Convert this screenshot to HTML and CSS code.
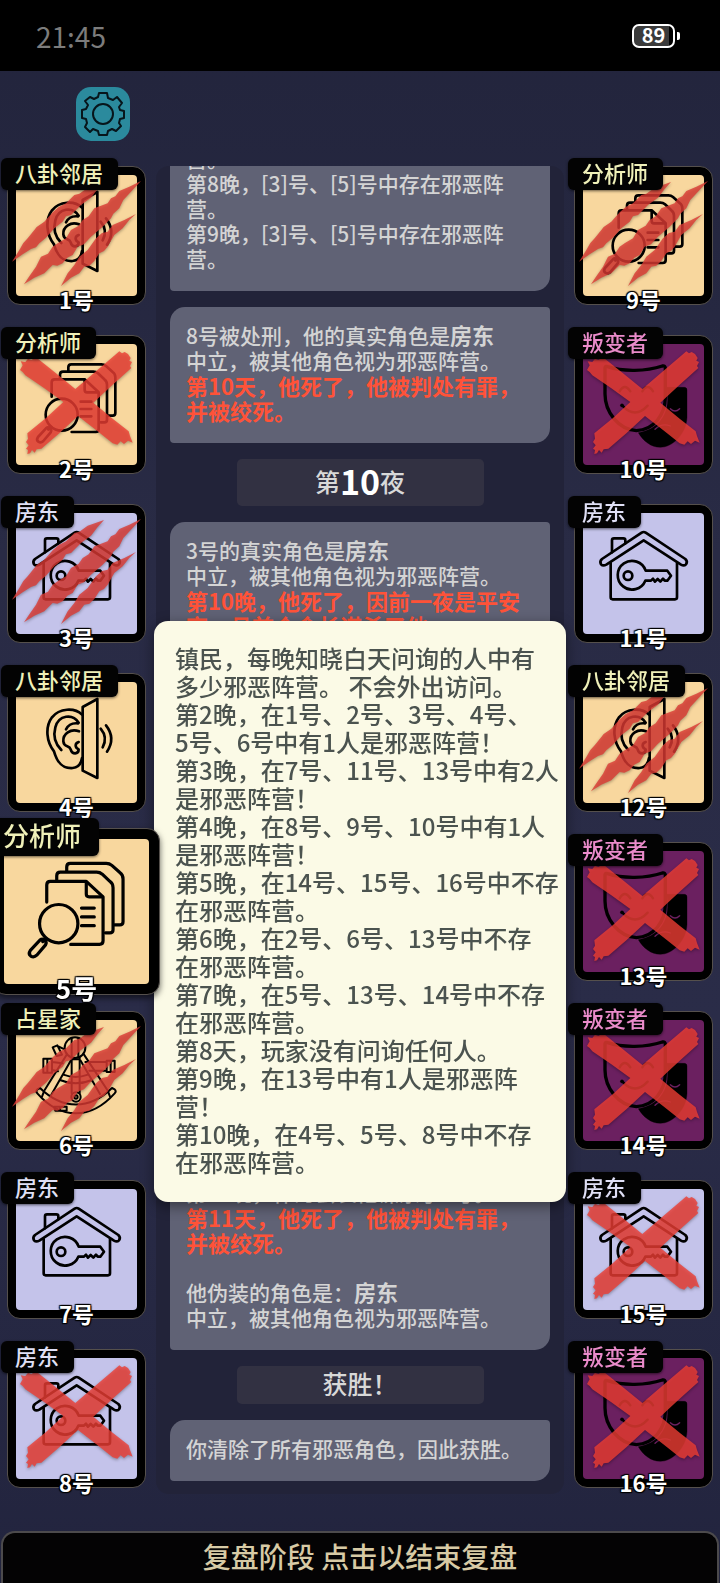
FILE: index.html
```html
<!doctype html>
<html lang="zh-CN">
	<head>
		<meta charset="UTF-8" />
		<meta name="viewport" content="width=device-width, initial-scale=1.0" />
		<title>复盘阶段</title>
		<link rel="stylesheet" href="styles.css">
	</head>
	<body>
		<!-- 图标定义 -->
		<svg class="icon-defs" aria-hidden="true">
			<defs>
				<g id="icon-ear" fill="none" stroke="#000" stroke-width="8" stroke-linecap="round" stroke-linejoin="round">
					<path d="M200 75L244 51V288L200 266Z" />
					<path d="M198 98C176 76 130 78 108 106C86 136 92 180 114 208C124 244 140 260 170 258C188 256 196 244 198 228" />
					<path d="M188 122C170 94 128 98 118 136C110 166 120 188 136 204" />
					<path d="M186 124C168 122 156 130 150 142M189 148C164 138 140 156 142 178C144 198 160 188 164 202C168 218 188 218 188 202C176 196 176 184 188 180" />
					<path d="M254 140Q276 166 260 196M270 130Q300 168 273 209" />
				</g>
				<g id="icon-docs" fill="none" stroke="#000" stroke-width="8" stroke-linecap="round" stroke-linejoin="round">
					<path d="M157 80V70Q157 61 166 61H256Q264 61 270 66L290 84Q298 90 298 100V207Q298 215 290 215H277" />
					<path d="M132 102V92Q132 83 141 83H232Q240 83 246 88L265 106Q273 112 273 122V227Q273 235 265 235H254" />
					<path d="M107 158V115Q107 106 116 106H206L248 145V255Q248 264 239 264H167" />
					<path d="M206 108V138Q206 145 213 145H246M194 173H226M194 195H226M194 217H226" />
					<circle cx="137" cy="212" r="48" />
					<path d="M105 249L97 257M90 253L66 279Q60 288 67 293Q75 298 82 291L104 265Q108 258 102 253Q96 248 90 253Z" />
				</g>
				<g id="icon-house" fill="none" stroke="#000" stroke-width="8" stroke-linecap="round" stroke-linejoin="round">
					<path d="M83 150V253Q83 259 89 259H276Q282 259 282 253V150" />
					<path d="M57 138L176 59Q182 55 188 59L307 138Q315 146 309 154Q303 160 294 155L182 82L70 155Q60 160 54 154Q49 145 57 138Z" />
					<path d="M87 118V82Q87 76 93 76H121Q127 76 127 82V91" />
					<path d="M188 173A43 43 0 1 0 187 203H204L210 197L216 206L224 198L232 206L240 197L245 203H253L264 188L253 173Z" />
					<circle cx="135" cy="188" r="13" />
				</g>
				<g id="icon-mask" stroke="#000" stroke-linecap="round" stroke-linejoin="round">
					<path d="M252 130H304Q312 130 312 138V220C310 270 268 310 232 310C204 310 180 290 166 266C224 258 256 214 254 160Z" />
					<path d="M66 72Q66 65 74 68C120 84 190 82 238 66Q247 64 247 73V160C247 212 212 258 160 260C106 256 66 204 66 150Z" fill="none" stroke-width="10" />
					<path d="M110 142Q125 116 142 142M178 142Q194 116 210 142M118 185Q156 226 194 185" fill="none" stroke-width="7" />
					<circle cx="117" cy="184" r="5" />
					<path d="M262 194Q276 208 290 194M216 256Q236 236 262 246" fill="none" stroke="#6b2060" stroke-width="4" />
				</g>
				<g id="icon-sextant" fill="none" stroke="#000" stroke-width="6" stroke-linecap="round" stroke-linejoin="round">
					<circle cx="177" cy="83" r="31" />
					<path d="M167 55V110M187 55V110M167 112V220M191 112V220M167 118H191" />
					<path d="M152 104L86 210M164 122L106 224M204 104L274 210M194 122L252 222" />
					<path d="M64 208Q58 214 64 220C134 300 224 300 296 220Q302 214 296 208L288 204C220 270 140 270 72 204Z" />
					<path d="M84 214L78 230M276 214L282 230M132 180Q178 200 228 180M142 164Q178 178 216 164" />
					<circle cx="180" cy="231" r="14" />
					<circle cx="180" cy="231" r="5" />
					<path d="M208 126H272M220 152H272M272 122H296V156H272ZM284 122V156" />
					<path d="M82 116H108V158H82ZM94 116V158M108 126L140 130M108 150L126 154" />
					<path d="M110 82L124 76L138 104L122 108ZM124 78L146 88M114 260H152V272H118ZM132 260V272" />
				</g>
				<g id="mark-cross" fill="#ee3d33" opacity="0.8">
					<path d="M12 78L20 64L14 52L28 54L36 44L46 48L60 40L120 88L178 135L240 82L298 32L310 22L318 28L326 24L336 30L344 42L340 50L348 54L342 66L346 72L290 122L232 176L290 224L338 262L342 276L350 296L336 290L324 300L314 292L304 302L290 298L240 258L186 216L130 268L76 314L62 316L56 326L48 318L42 328L34 330L36 318L30 314L38 304L30 294L36 284L34 268L90 222L142 174L84 132L28 94L20 84Z" />
				</g>
				<g id="mark-claw" fill="#dc3a34" opacity="0.8">
					<path d="M264 21L215 38L190 56L175 60L150 85L128 96L110 112L85 140L62 156L55 165L35 190L22 204L10 225L-12 260L20 238L45 222L60 217L70 205L90 188L115 160L140 140L150 124L165 120L195 90L225 68L245 42Z" />
					<path d="M375 18L340 35L310 48L298 64L285 70L275 85L235 100L218 124L200 135L188 152L165 165L150 190L126 204L110 215L96 236L75 245L60 275L40 304L24 328L55 308L85 295L110 270L124 272L140 265L154 248L170 240L185 215L204 208L225 185L260 155L285 130L292 116L310 100L322 75L345 50Z" />
					<path d="M360 117L325 135L290 150L275 170L258 174L240 190L215 225L190 245L175 270L155 295L135 333L165 308L190 295L205 275L220 272L235 258L250 235L264 228L275 215L295 180L320 160L340 135Z" />
				</g>
			</defs>
		</svg>

		<div class="status-bar">
			<span class="time">21:45</span>
			<span class="battery"><span class="battery-num">89</span></span>
		</div>

		<header class="toolbar">
			<button class="setting-btn" id="settingBtn" aria-label="设置">
				<svg viewBox="0 0 54 54" fill="none" stroke="#07151b" stroke-width="2" stroke-linejoin="round">
					<path d="M23 6H31L32 11L37 13L41 10L46 16L43 20L44 23L48 24V31L44 32L43 36L45 39L40 44L36 42L32 44L31 48H23L22 44L17 42L14 45L9 40L11 36L10 32L6 31V23L10 22L12 18L9 14L14 10L18 12L22 10Z" />
					<circle cx="27" cy="27" r="10" />
				</svg>
			</button>
		</header>

		<main class="board">
			<div class="seats" id="seatsLeft"></div>

			<section class="log">
				<div class="log-list">
					<div class="message">
						<p>营。</p>
						<p>第8晚，[3]号、[5]号中存在邪恶阵<br />营。</p>
						<p>第9晚，[3]号、[5]号中存在邪恶阵<br />营。</p>
					</div>
					<div class="message">
						<p>8号被处刑，他的真实角色是<b>房东</b></p>
						<p>中立，被其他角色视为邪恶阵营。</p>
						<p class="death">第10天，他死了，他被判处有罪，<br />并被绞死。</p>
					</div>
					<div class="banner">第<strong>10</strong>夜</div>
					<div class="message long">
						<p>3号的真实角色是<b>房东</b></p>
						<p>中立，被其他角色视为邪恶阵营。</p>
						<p class="death">第10晚，他死了，因前一夜是平安<br />夜，且首个会长谋杀了他。</p>
					</div>
					<div class="message long latest">
						<p>第10晚，作为会长他谋杀了3号。</p>
						<p class="death">第11天，他死了，他被判处有罪，<br />并被绞死。</p>
						<p class="disguise">他伪装的角色是：<b>房东</b></p>
						<p>中立，被其他角色视为邪恶阵营。</p>
					</div>
					<div class="banner small">获胜！</div>
					<div class="message">
						<p>你清除了所有邪恶角色，因此获胜。</p>
					</div>
				</div>
			</section>

			<div class="seats" id="seatsRight"></div>

			<div class="role-tip" role="tooltip">
				<p>镇民，每晚知晓白天问询的人中有<br />多少邪恶阵营。 不会外出访问。</p>
				<p>第2晚，在1号、2号、3号、4号、<br />5号、6号中有1人是邪恶阵营！</p>
				<p>第3晚，在7号、11号、13号中有2人<br />是邪恶阵营！</p>
				<p>第4晚，在8号、9号、10号中有1人<br />是邪恶阵营！</p>
				<p>第5晚，在14号、15号、16号中不存<br />在邪恶阵营。</p>
				<p>第6晚，在2号、6号、13号中不存<br />在邪恶阵营。</p>
				<p>第7晚，在5号、13号、14号中不存<br />在邪恶阵营。</p>
				<p>第8天，玩家没有问询任何人。</p>
				<p>第9晚，在13号中有1人是邪恶阵<br />营！</p>
				<p>第10晚，在4号、5号、8号中不存<br />在邪恶阵营。</p>
			</div>
		</main>

		<button class="end-btn" id="endBtn">复盘阶段 点击以结束复盘</button>

		<script>
			const roles = {
				ear: { name: "八卦邻居", camp: "town" },
				docs: { name: "分析师", camp: "town" },
				sextant: { name: "占星家", camp: "town" },
				house: { name: "房东", camp: "neutral" },
				mask: { name: "叛变者", camp: "evil" },
			};

			// claw: 夜晚被杀  cross: 白天被处刑
			const players = [
				{ role: "ear", mark: "claw" },
				{ role: "docs", mark: "cross" },
				{ role: "house", mark: "claw" },
				{ role: "ear" },
				{ role: "docs", selected: true },
				{ role: "sextant", mark: "claw" },
				{ role: "house" },
				{ role: "house", mark: "cross" },
				{ role: "docs", mark: "claw" },
				{ role: "mask", mark: "cross" },
				{ role: "house" },
				{ role: "ear", mark: "claw" },
				{ role: "mask", mark: "cross" },
				{ role: "mask", mark: "cross" },
				{ role: "house", mark: "cross" },
				{ role: "mask", mark: "cross" },
			];

			function renderSeat(player, index) {
				const role = roles[player.role];
				const seat = document.createElement("button");
				seat.className = `seat ${role.camp}`;
				if (player.selected) seat.classList.add("selected");
				seat.innerHTML = `
					<svg class="portrait" viewBox="0 0 363 363" aria-hidden="true">
						<use href="#icon-${player.role}" />
						${player.mark ? `<use class="mark" href="#mark-${player.mark}" />` : ""}
					</svg>
					<span class="role-name">${role.name}</span>
					<span class="seat-num">${index + 1}号</span>`;
				return seat;
			}

			players.forEach((player, index) => {
				const column = document.getElementById(index < 8 ? "seatsLeft" : "seatsRight");
				column.appendChild(renderSeat(player, index));
			});
		</script>
	</body>
</html>
```
FILE: styles.css
```css
* {
	margin: 0;
	padding: 0;
	box-sizing: border-box;
}

body {
	display: flex;
	flex-direction: column;
	min-height: 100vh;
	overflow-x: hidden;
	font-family: "Noto Sans CJK SC", sans-serif;
	font-weight: 500;
	background: linear-gradient(180deg, #22243c 0%, #292b45 35%, #2a2c48 65%, #22243e 100%);
}

button {
	border: none;
	font-family: inherit;
	font-weight: inherit;
	cursor: pointer;
}

.icon-defs {
	position: absolute;
	width: 0;
	height: 0;
}

.status-bar {
	display: flex;
	justify-content: space-between;
	align-items: center;
	height: 71px;
	padding: 0 45px 0 36px;
	background: #000;
}

.time {
	color: #7c7c7c;
	font-size: 28px;
	font-weight: 400;
}

.battery {
	position: relative;
	width: 43px;
	height: 24px;
	border: 2px solid #fff;
	border-radius: 7px;
	background: linear-gradient(90deg, #3b3b3b 89%, #000 89%);
	text-align: center;
}

.battery::after {
	content: "";
	position: absolute;
	top: 6px;
	right: -7px;
	width: 3px;
	height: 8px;
	border-radius: 0 2px 2px 0;
	background: #fff;
}

.battery-num {
	display: block;
	color: #fff;
	font-size: 20px;
	font-weight: 700;
	line-height: 18px;
}

.toolbar {
	padding: 16px 76px 25px;
}

.setting-btn {
	display: block;
	width: 54px;
	height: 54px;
	border-radius: 15px;
	background: #2b8a9d;
}

.board {
	position: relative;
	display: grid;
	grid-template-columns: 139px 1fr 139px;
	gap: 10px;
	padding: 0 7px;
}

.seats {
	display: flex;
	flex-direction: column;
	gap: 30px;
	padding-bottom: 6px;
}

.seat {
	position: relative;
	width: 139px;
	height: 139px;
	padding: 8px;
	border: 1px solid #55504c;
	border-radius: 13px;
	background: #000;
}

.portrait {
	display: block;
	width: 100%;
	height: 100%;
	border-radius: 4px;
	overflow: visible;
}

.town .portrait {
	background: #f8d79e;
}

.neutral .portrait {
	background: #c4c3ea;
}

.evil .portrait {
	background: #6b2060;
}

.mark {
	filter: drop-shadow(0 4px 4px rgba(0, 0, 0, 0.4));
}

.role-name {
	position: absolute;
	top: -9px;
	left: -7px;
	padding: 0 15px 4px 14px;
	border-radius: 6px;
	background: #030303;
	box-shadow: 0 1px 3px rgba(0, 0, 0, 0.6);
	font-size: 22px;
	line-height: 28px;
	white-space: nowrap;
}

.town .role-name {
	color: #eff0b8;
}

.neutral .role-name {
	color: #e0e0f6;
}

.evil .role-name {
	color: #ea8bca;
}

.seat-num {
	position: absolute;
	right: 0;
	bottom: -8px;
	left: 0;
	color: #fff;
	font-size: 22px;
	font-weight: 700;
	line-height: 26px;
	text-align: center;
	text-shadow:
		1px 1px 1px #000,
		-1px 1px 1px #000,
		1px -1px 1px #000,
		-1px -1px 1px #000;
}

.seat.selected {
	z-index: 3;
	width: 167px;
	height: 167px;
	margin: -14px;
	padding: 10px;
	box-shadow: 0 3px 6px rgba(0, 0, 0, 0.6);
}

.selected .role-name {
	top: -11px;
	left: -8px;
	padding: 0 18px 4px 17px;
	font-size: 26px;
	line-height: 34px;
}

.selected .seat-num {
	bottom: -10px;
	font-size: 26px;
	line-height: 32px;
}

/* 战报，默认滚动到底部 */
.log {
	display: flex;
	flex-direction: column-reverse;
	height: 0;
	min-height: 100%;
	padding: 0 14px;
	border-radius: 13px;
	background: #222339;
	overflow-y: auto;
	scrollbar-width: none;
}

.log-list {
	display: flex;
	flex-direction: column;
	gap: 16px;
	padding-bottom: 13px;
}

.message {
	padding: 16px 16px 20px;
	border-radius: 15px 4px 15px 4px;
	background: #606275;
	color: #d4d4d4;
	font-size: 21px;
	line-height: 25px;
	white-space: nowrap;
}

.message.long {
	display: flex;
	flex-direction: column;
	min-height: 406px;
}

.message.latest {
	justify-content: flex-end;
}

.message b,
.message .death {
	font-size: 22px;
	font-weight: 700;
}

.message b {
	line-height: 1;
}

.message .death {
	color: #ff5238;
}

.message .disguise {
	margin-top: 25px;
}

.banner {
	display: flex;
	justify-content: center;
	align-items: center;
	align-self: center;
	width: 65%;
	height: 47px;
	padding-bottom: 4px;
	border-radius: 5px;
	background: #323142;
	color: #d8d8d8;
	font-size: 25px;
}

.banner.small {
	height: 38px;
}

.banner strong {
	color: #fff;
	font-size: 34px;
	line-height: 42px;
}

.role-tip {
	position: absolute;
	top: 455px;
	right: 154px;
	left: 154px;
	z-index: 2;
	padding: 23px 10px 26px 21px;
	border-radius: 14px;
	background: #fbfae6;
	box-shadow: 0 4px 14px rgba(0, 0, 0, 0.45);
	color: #4b534f;
	font-size: 24px;
	line-height: 28px;
	white-space: nowrap;
}

.end-btn {
	height: 52px;
	margin: auto 1px 0;
	padding-bottom: 4px;
	border: 2px solid #4c4a4c;
	border-bottom: none;
	border-radius: 14px 14px 0 0;
	background: #040304;
	color: #d7caa5;
	font-size: 28px;
	line-height: 44px;
}
```
